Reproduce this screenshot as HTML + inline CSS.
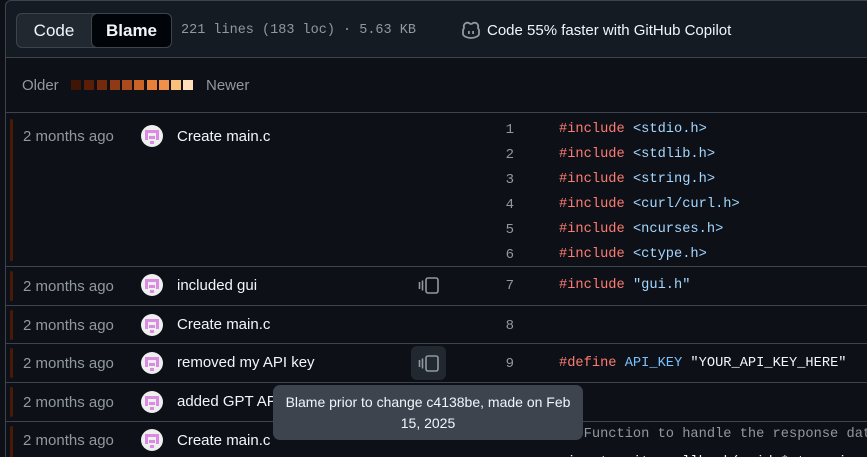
<!DOCTYPE html>
<html><head><meta charset="utf-8"><style>
*{box-sizing:border-box;margin:0;padding:0}
html,body{width:867px;height:457px;overflow:hidden}
body{background:#0d1117;font-family:"Liberation Sans",sans-serif;color:#f0f6fc;position:relative}
.hdr{position:absolute;left:5px;top:0;width:880px;height:58px;background:#151b23;border:1px solid #3d444d;border-top-left-radius:6px}
.seg{position:absolute;left:10px;top:12px;width:155px;height:35px;background:#212830;border:1px solid #3d444d;border-radius:6px}
.seg .c{position:absolute;left:0;top:0;width:74px;height:33px;text-align:center;line-height:33px;font-size:17px}
.seg .b{position:absolute;left:74px;top:-1px;width:81px;height:35px;background:#010409;border:1px solid #3d444d;border-radius:6px;text-align:center;line-height:33px;font-size:17px;font-weight:bold}
.meta{position:absolute;left:175px;top:22px;font-family:"Liberation Mono",monospace;font-size:13.5px;color:#9198a1}
.cop{position:absolute;left:481px;top:21px;font-size:15px}
.older{position:absolute;left:5px;top:58px;width:880px;height:55px;border-left:1px solid #3d444d;border-bottom:1px solid #3d444d}
.older span{position:absolute;top:19px;font-size:15px;color:#9198a1}
.sq{position:absolute;top:80px;width:10px;height:10px}
.left{position:absolute;left:5px;top:113px;width:1px;height:344px;background:#3d444d}
.row{position:absolute;left:6px;width:870px;border-bottom:1px solid #3d444d;overflow:hidden}
.bar{position:absolute;left:4px;width:3px;background:#4a1a08;border-radius:2px}
.t{position:absolute;left:17px;font-size:15px;color:#9198a1}
.av{position:absolute;left:135px;width:22px;height:22px}
.m{position:absolute;left:171px;font-size:15px}
.n{position:absolute;width:30px;left:484px;text-align:right;font-family:"Liberation Mono",monospace;font-size:14px;color:#9198a1}
.code{position:absolute;left:559px;font-family:"Liberation Mono",monospace;font-size:13.7px;color:#f0f6fc;white-space:pre}
.k{color:#ff7b72}.s{color:#a5d6ff}.v{color:#79c0ff}.cm{color:#9198a1}
.tip{position:absolute;left:273px;top:385px;width:310px;height:55px;background:#3d444d;border-radius:7px;text-align:center;font-size:14px;line-height:21px;padding-top:7px;color:#f0f6fc}
.ic{position:absolute}
</style></head><body>
<svg width="0" height="0" style="position:absolute"><defs><g id="av"><circle cx="11" cy="11" r="11" fill="#efefef"/><rect x="4" y="5" width="14" height="3" fill="#d98ce0"/><rect x="4" y="5" width="3" height="10" fill="#d98ce0"/><rect x="15" y="5" width="3" height="10" fill="#d98ce0"/><rect x="8" y="11" width="6" height="3" fill="#d98ce0"/><rect x="9" y="16" width="4" height="3" fill="#d98ce0"/></g></defs></svg>
<div class="hdr">
<div class="seg"><div class="c">Code</div><div class="b">Blame</div></div>
<div class="meta">221 lines (183 loc) · 5.63 KB</div>
<svg class="ic" style="left:455px;top:20px" width="20" height="18" viewBox="0 0 20 18"><path d="M3 7C2 3 5 1 8 2 9 3 10 3 10 3 10 3 11 3 12 2 15 1 18 3 17 7L18 9V13C18 15 14 17 10 17 6 17 2 15 2 13V9Z" fill="none" stroke="#9198a1" stroke-width="1.8"/><rect x="7" y="10" width="1.8" height="3" fill="#9198a1"/><rect x="11.2" y="10" width="1.8" height="3" fill="#9198a1"/></svg>
<div class="cop">Code 55% faster with GitHub Copilot</div>
</div>
<div class="older"><span style="left:16px">Older</span><span style="left:200px">Newer</span></div>
<div class="sq" style="left:71px;background:#3f1505"></div>
<div class="sq" style="left:84px;background:#5b1d06"></div>
<div class="sq" style="left:97px;background:#762a0c"></div>
<div class="sq" style="left:110px;background:#8f3a14"></div>
<div class="sq" style="left:122px;background:#ab4a1c"></div>
<div class="sq" style="left:134px;background:#cb6326"></div>
<div class="sq" style="left:147px;background:#e88039"></div>
<div class="sq" style="left:159px;background:#f1904a"></div>
<div class="sq" style="left:171px;background:#fbc07a"></div>
<div class="sq" style="left:183px;background:#fde0b9"></div>
<div class="left"></div>

<div class="row" style="top:113px;height:154px"><div class="bar" style="top:6px;height:142px"></div><div class="t" style="top:15px">2 months ago</div>
<svg class="av" style="top:12px"><use href="#av"/></svg>
<div class="m" style="top:15px">Create main.c</div></div>
<div class="n" style="top:122px">1</div><div class="code" style="top:122px"><span class="k">#include</span> <span class="s">&lt;stdio.h&gt;</span></div>
<div class="n" style="top:147px">2</div><div class="code" style="top:147px"><span class="k">#include</span> <span class="s">&lt;stdlib.h&gt;</span></div>
<div class="n" style="top:172px">3</div><div class="code" style="top:172px"><span class="k">#include</span> <span class="s">&lt;string.h&gt;</span></div>
<div class="n" style="top:197px">4</div><div class="code" style="top:197px"><span class="k">#include</span> <span class="s">&lt;curl/curl.h&gt;</span></div>
<div class="n" style="top:222px">5</div><div class="code" style="top:222px"><span class="k">#include</span> <span class="s">&lt;ncurses.h&gt;</span></div>
<div class="n" style="top:247px">6</div><div class="code" style="top:247px"><span class="k">#include</span> <span class="s">&lt;ctype.h&gt;</span></div>

<div class="row" style="top:267px;height:39px"><div class="bar" style="top:4px;height:30px"></div><div class="t" style="top:11px">2 months ago</div><svg class="av" style="top:7px"><use href="#av"/></svg><div class="m" style="top:10px">included gui</div></div>
<div class="n" style="top:278px">7</div><div class="code" style="top:278px"><span class="k">#include</span> <span class="s">"gui.h"</span></div>
<div class="row" style="top:306px;height:38px"><div class="bar" style="top:4px;height:30px"></div><div class="t" style="top:11px">2 months ago</div><svg class="av" style="top:8px"><use href="#av"/></svg><div class="m" style="top:10px">Create main.c</div></div>
<div class="n" style="top:318px">8</div>
<div class="row" style="top:344px;height:39px"><div class="bar" style="top:4px;height:30px"></div><div class="t" style="top:11px">2 months ago</div><svg class="av" style="top:8px"><use href="#av"/></svg><div class="m" style="top:10px">removed my API key</div></div>
<div style="position:absolute;left:411px;top:346px;width:35px;height:34px;background:#212830;border-radius:6px"></div>
<div class="n" style="top:356px">9</div><div class="code" style="top:356px"><span class="k">#define</span> <span class="v">API_KEY</span> "YOUR_API_KEY_HERE"</div>
<div class="row" style="top:383px;height:39px"><div class="bar" style="top:4px;height:30px"></div><div class="t" style="top:11px">2 months ago</div><svg class="av" style="top:8px"><use href="#av"/></svg><div class="m" style="top:10px">added GPT API</div></div>
<div class="row" style="top:422px;height:40px;border:none"><div class="bar" style="top:4px;height:40px"></div><div class="t" style="top:10px">2 months ago</div><svg class="av" style="top:7px"><use href="#av"/></svg><div class="m" style="top:10px">Create main.c</div></div>
<div class="code cm" style="top:427px">// Function to handle the response data</div>
<div class="n" style="top:455px">12</div><div class="code" style="top:455px">size_t write_callback(void *ptr, size_t</div>

<svg class="ic" style="left:418px;top:277px" width="22" height="17" viewBox="0 0 22 17"><path d="M1.5 5v7M4.5 3.5v10" stroke="#9198a1" stroke-width="1.6"/><rect x="8" y="1" width="12" height="15" rx="2" fill="none" stroke="#9198a1" stroke-width="1.6"/></svg>
<svg class="ic" style="left:418px;top:355px" width="22" height="17" viewBox="0 0 22 17"><path d="M1.5 5v7M4.5 3.5v10" stroke="#9198a1" stroke-width="1.6"/><rect x="8" y="1" width="12" height="15" rx="2" fill="none" stroke="#9198a1" stroke-width="1.6"/></svg>
<div class="tip">Blame prior to change c4138be, made on Feb<br>15, 2025</div>
</body></html>
